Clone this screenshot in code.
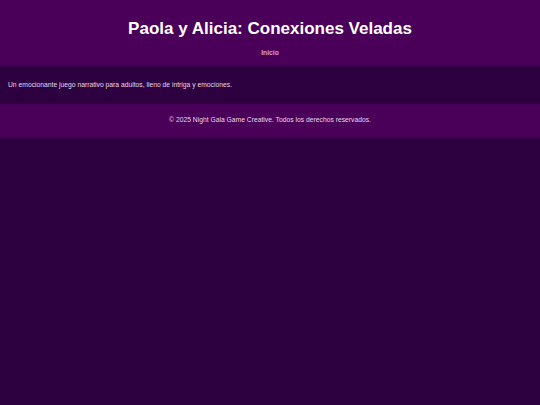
export default function App() {
  return (
    <div
      className="min-h-[405px] bg-[#2d0040] text-[#e6d8ec]"
      style={{ fontFamily: '"Liberation Sans", Arial, sans-serif' }}
    >
      <header className="bg-[#4a0059] pt-[19px] pb-[9px] text-center">
        <h1 className="text-[17px] leading-[20px] font-bold text-white">
          Paola y Alicia: Conexiones Veladas
        </h1>
        <nav className="mt-[10px] text-[6.75px] leading-[8px]">
          <a className="font-bold text-[#d9a0dc]">Inicio</a>
        </nav>
      </header>

      <main className="px-[8px] py-[15px]">
        <p className="text-[6.75px] leading-[8px]">
          Un emocionante juego narrativo para adultos, lleno de intriga y emociones.
        </p>
      </main>

      <footer className="bg-[#4a0059] pt-[12px] pb-[14px] text-center">
        <p className="text-[6.75px] leading-[8px]">
          © 2025 Night Gala Game Creative. Todos los derechos reservados.
        </p>
      </footer>
    </div>
  );
}
